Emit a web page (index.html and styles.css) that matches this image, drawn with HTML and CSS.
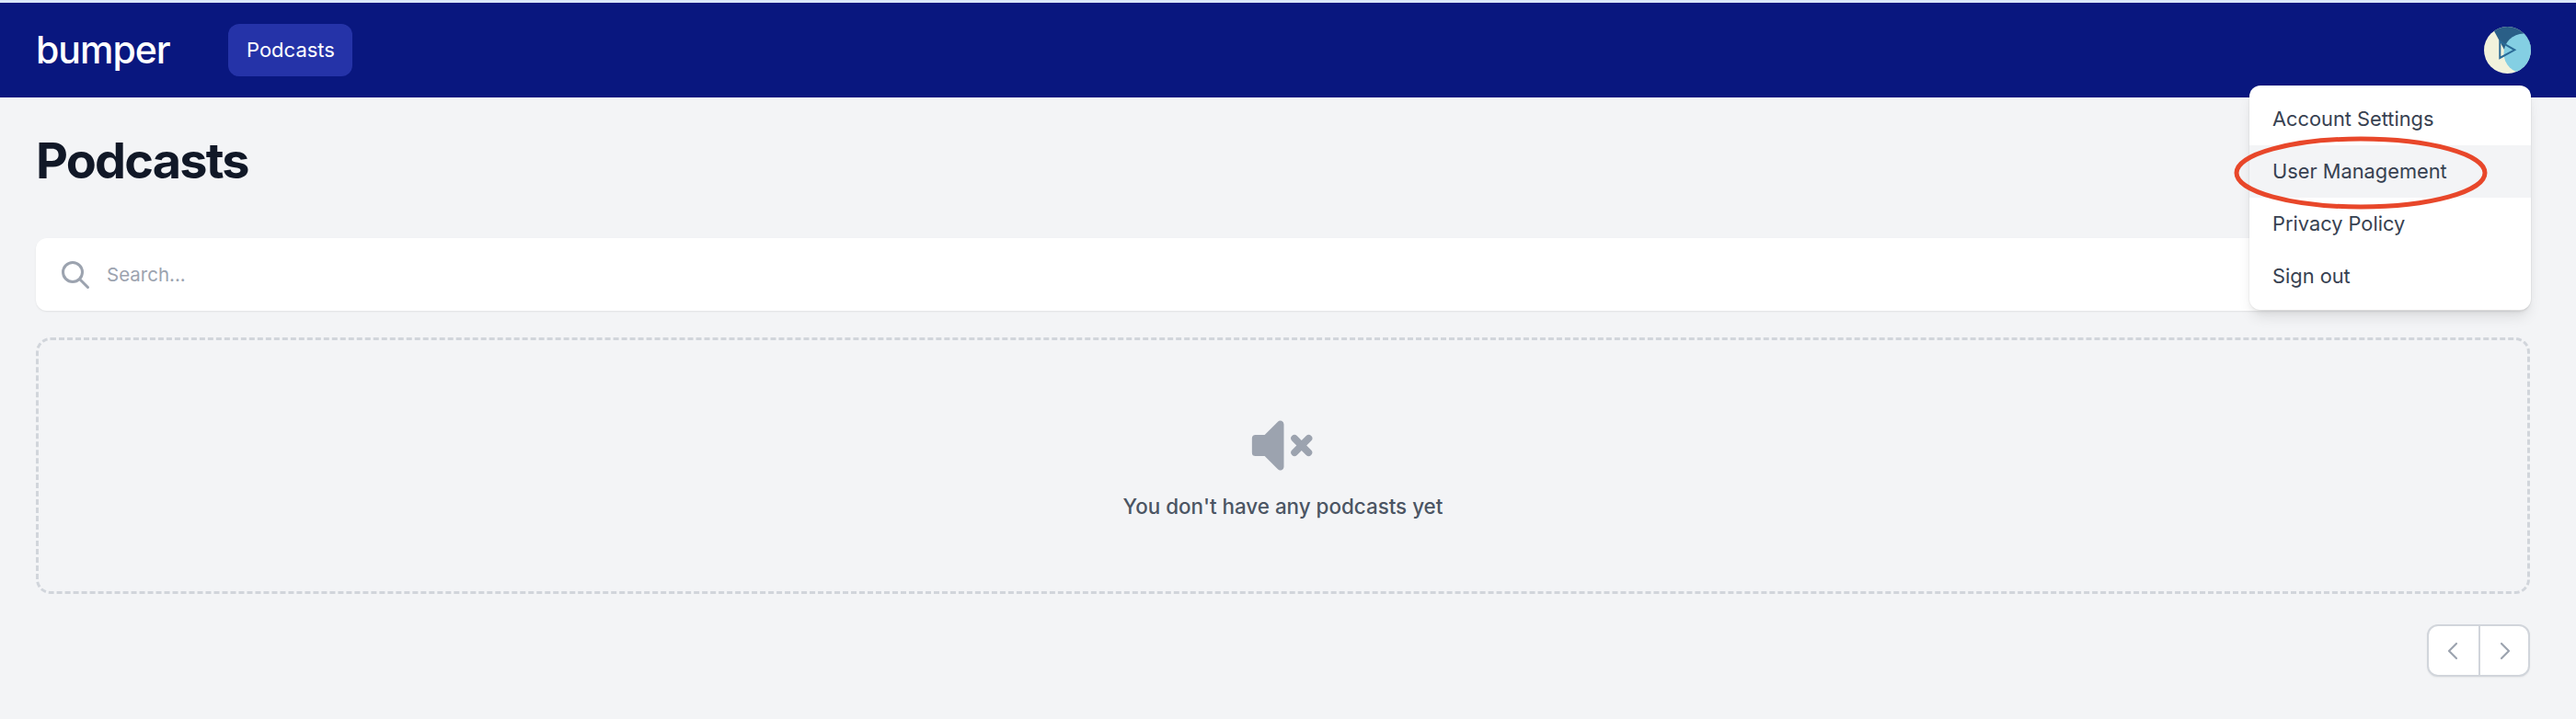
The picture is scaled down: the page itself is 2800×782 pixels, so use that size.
FILE: index.html
```html
<!DOCTYPE html>
<html lang="en">
<head>
    <meta charset="UTF-8">
    <title>Podcasts</title>
    <link rel="stylesheet" href="styles.css">
</head>
<body>
    <nav class="nav">
        <div class="nav-left">
            <span class="logo">bumper</span>
            <a class="nav-link">Podcasts</a>
        </div>
        <svg class="avatar" viewBox="0 0 51 51">
            <clipPath id="avatar-clip"><circle cx="25.5" cy="25.5" r="25.5"/></clipPath>
            <g clip-path="url(#avatar-clip)">
                <rect width="51" height="51" fill="#f1f2dc"/>
                <path d="M10.7 4.3L22 25H51V0H10.7Z" fill="#2a5f87"/>
                <circle cx="43" cy="29" r="21.5" fill="#84cfe3"/>
                <path d="M17.3 16L33.3 25.3L17.3 34Z" fill="none" stroke="#2a6a96" stroke-width="2"/>
            </g>
        </svg>
    </nav>

    <main class="content">
        <h1 class="title">Podcasts</h1>

        <div class="search">
            <svg class="search-icon" viewBox="0 0 24 24" fill="none" stroke="#9ca3af" stroke-width="2" stroke-linecap="round" stroke-linejoin="round">
                <path d="M21 21l-6-6m2-5a7 7 0 11-14 0 7 7 0 0114 0z"/>
            </svg>
            <span class="search-text">Search...</span>
        </div>

        <div class="empty">
            <svg class="empty-icon" viewBox="0 0 20 20" fill="#9ca3af">
                <path fill-rule="evenodd" d="M9.383 3.076A1 1 0 0110 4v12a1 1 0 01-1.707.707L4.586 13H2a1 1 0 01-1-1V8a1 1 0 011-1h2.586l3.707-3.707a1 1 0 011.09-.217zM12.293 7.293a1 1 0 011.414 0L15 8.586l1.293-1.293a1 1 0 111.414 1.414L16.414 10l1.293 1.293a1 1 0 01-1.414 1.414L15 11.414l-1.293 1.293a1 1 0 01-1.414-1.414L13.586 10l-1.293-1.293a1 1 0 010-1.414z" clip-rule="evenodd"/>
            </svg>
            <p class="empty-text">You don't have any podcasts yet</p>
        </div>

        <div class="pager-row">
            <div class="pager">
                <button class="pager-btn">
                    <svg viewBox="0 0 24 24" fill="none" stroke="#9ca3af" stroke-width="2.2" stroke-linecap="round" stroke-linejoin="round"><path d="M15 4l-8 8 8 8"/></svg>
                </button>
                <button class="pager-btn">
                    <svg viewBox="0 0 24 24" fill="none" stroke="#9ca3af" stroke-width="2.2" stroke-linecap="round" stroke-linejoin="round"><path d="M9 4l8 8-8 8"/></svg>
                </button>
            </div>
        </div>
    </main>

    <div class="menu">
        <a class="menu-item">Account Settings</a>
        <a class="menu-item menu-item-active">User Management</a>
        <a class="menu-item">Privacy Policy</a>
        <a class="menu-item">Sign out</a>
        <!-- hand drawn annotation round the second row -->
        <svg class="ring" viewBox="0 0 276 80" fill="none">
            <ellipse cx="138" cy="40" rx="135" ry="37" stroke="#e8472a" stroke-width="5"/>
        </svg>
    </div>
</body>
</html>
```

FILE: styles.css
```css
* {
    box-sizing: border-box;
}
html, body {
    margin: 0;
    height: 782px;
    overflow: hidden;
}
body {
    background-color: #f3f4f6;
    font-family: "Inter", "Liberation Sans", sans-serif;
    color: #374151;
}

/* top bar */
.nav {
    display: flex;
    justify-content: space-between;
    align-items: center;
    height: 106px;
    padding: 0 49px 0 39px;
    background-color: #09177f;
    border-top: 3px solid #dbe7fb;
}
.nav-left {
    display: flex;
    align-items: center;
}
.logo {
    width: 209px;
    font-size: 41px;
    font-weight: 500;
    letter-spacing: -1px;
    line-height: 57px;
    color: #fff;
}
.nav-link {
    display: block;
    padding: 0 19px 0 20px;
    height: 57px;
    line-height: 57px;
    border-radius: 12px;
    background-color: #2533a8;
    color: #fff;
    font-size: 22px;
}
.avatar {
    display: block;
    width: 51px;
    height: 51px;
}

/* page */
.content {
    padding: 0 50px 0 39px;
}
.title {
    margin: 0;
    padding-top: 37px;
    height: 153px;
    font-size: 54px;
    line-height: 64px;
    font-weight: 700;
    letter-spacing: -1.8px;
    color: #111827;
}
.search {
    display: flex;
    align-items: center;
    height: 79px;
    padding-left: 25px;
    border-radius: 12px;
    background-color: #fff;
    box-shadow: 0 1px 2px rgba(0, 0, 0, .08);
}
.search-icon {
    width: 36px;
    height: 36px;
}
.search-text {
    margin-left: 16px;
    font-size: 20.5px;
    color: #9ca3af;
}
.empty {
    display: flex;
    flex-direction: column;
    align-items: center;
    height: 279px;
    margin-top: 29px;
    padding-top: 76px;
    border: 3px dashed #d1d5db;
    border-radius: 16px;
}
.empty-icon {
    display: block;
    width: 77px;
    height: 77px;
    margin-left: 2px;
}
.empty-text {
    margin: 14px 0 0;
    font-size: 22.4px;
    font-weight: 500;
    color: #4b5563;
}
.pager-row {
    display: flex;
    justify-content: flex-end;
    margin-top: 33px;
}
.pager {
    display: flex;
    height: 57px;
    border: 2px solid #d1d5db;
    border-radius: 12px;
    background-color: #fff;
    box-shadow: 0 1px 2px rgba(0, 0, 0, .06);
    overflow: hidden;
}
.pager-btn {
    display: flex;
    align-items: center;
    justify-content: center;
    width: 54px;
    padding: 0;
    border: 0;
    background: none;
}
.pager-btn + .pager-btn {
    border-left: 2px solid #d1d5db;
}
.pager-btn svg {
    width: 24px;
    height: 24px;
}

/* dropdown, sits over the page */
.menu {
    position: absolute;
    top: 93px;
    left: 2445px;
    width: 306px;
    padding: 8px 0;
    border-radius: 12px;
    background-color: #fff;
    box-shadow: 0 10px 15px -3px rgba(0, 0, 0, .1), 0 4px 6px -2px rgba(0, 0, 0, .05), 0 0 0 1px rgba(0, 0, 0, .03);
}
.menu-item {
    display: block;
    height: 57px;
    padding-left: 25px;
    line-height: 57px;
    font-size: 21.8px;
    color: #374151;
}
.menu-item-active {
    background-color: #f3f4f6;
}
.ring {
    position: absolute;
    top: 55px;
    left: -17px;
    width: 276px;
    height: 80px;
}
```
